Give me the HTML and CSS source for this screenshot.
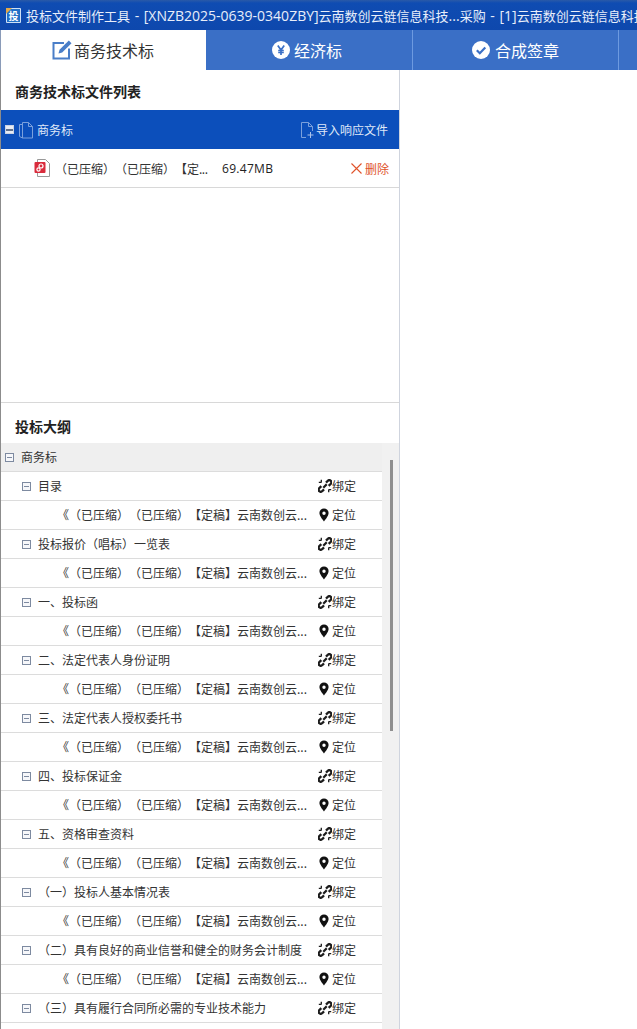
FILE: index.html
```html
<!DOCTYPE html>
<html lang="zh">
<head>
<meta charset="utf-8">
<title>投标文件制作工具</title>
<link rel="stylesheet" href="styles.css">
</head>
<body>
<svg class="defs" width="0" height="0">
  <defs>
    <symbol id="link" viewBox="0 0 14 14">
      <path d="M8 3.600 9.800 1.800a2.300 2.300 0 0 1 3 0 2.300 2.300 0 0 1 0 3L10.700 6.900M6 10.400 4.200 12.200a2.300 2.300 0 0 1-3 0 2.300 2.300 0 0 1 0-3L3.300 7.100" fill="none" stroke="#1c1c1c" stroke-width="2.300"/>
      <path d="M5.300 8.700 8.700 5.300" stroke="#1c1c1c" stroke-width="2.300"/>
      <path d="M.8 3.300h2.600M3.300.8v2.600M10.700 13.200v-2.600M13.200 10.700h-2.600" stroke="#1c1c1c" stroke-width="1.300"/>
    </symbol>
    <symbol id="pin" viewBox="0 0 10 14">
      <path fill-rule="evenodd" d="M5 .5a4.600 4.600 0 0 1 4.600 4.600C9.600 8.300 5 13.500 5 13.500S.4 8.300.4 5.100A4.600 4.600 0 0 1 5 .5Zm0 3a1.700 1.700 0 1 0 0 3.400 1.700 1.700 0 0 0 0-3.400Z" fill="#111"/>
    </symbol>
  </defs>
</svg>
<header class="titlebar">
  <span class="app-logo">
    <svg width="15" height="15" viewBox="0 0 15 15"><rect width="15" height="15" rx="1" fill="#cfe0f5"/><rect x="1" y="1" width="13" height="13" fill="#2270c8"/><path d="M0 0h6L0 6Z" fill="#e3a94a"/></svg>
    <span class="app-logo-text">投</span>
  </span>
  <span class="title-text">投标文件制作工具<span class="latin"> - [XNZB2025-0639-0340ZBY]</span>云南数创云链信息科技<span class="latin">...</span>采购<span class="latin"> - [1]</span>云南数创云链信息科技</span>
</header>
<nav class="tabs">
  <div class="tab tab-active">
    <svg width="22" height="22" viewBox="0 0 22 22"><path d="M13 4H2.500v15.500H18V9.500" fill="none" stroke="#4a7ec8" stroke-width="2"/><path d="M7.500 14.500 8.500 10.800 17.800 1.500 20.500 4.200 11.200 13.500Z" fill="#4a7ec8"/></svg>
    <span>商务技术标</span>
  </div>
  <div class="tab tab-second">
    <svg width="18" height="18" viewBox="0 0 18 18"><circle cx="9" cy="9" r="9" fill="#fff"/><path d="M5.800 4.500 9 9l3.200-4.500M9 9v5M6.200 9.500h5.600M6.200 11.500h5.600" fill="none" stroke="#3b70c6" stroke-width="1.700"/></svg>
    <span>经济标</span>
  </div>
  <div class="tab tab-third">
    <svg width="18" height="18" viewBox="0 0 18 18"><circle cx="9" cy="9" r="9" fill="#fff"/><path d="M4.800 9.200 7.800 12.200 13.300 6.500" fill="none" stroke="#3b70c6" stroke-width="2.200"/></svg>
    <span>合成签章</span>
  </div>
  <div class="tab tab-rest"></div>
</nav>
<main class="panel">
  <h2 class="section-head">商务技术标文件列表</h2>
  <div class="file-head">
    <span class="box box-light"></span>
    <svg class="doc-icon" width="16" height="18" viewBox="0 0 16 18"><path d="M4.500 1.500h6l4 4v11.500h-10Z" fill="none" stroke="#7ba0dc"/><path d="M4.500 3.500H1.500v12l3 1.500" fill="none" stroke="#7ba0dc"/><path d="M10.500 1.500v4h4" fill="none" stroke="#7ba0dc"/></svg>
    <span class="file-head-name">商务标</span>
    <svg class="import-icon" width="15" height="18" viewBox="0 0 15 18"><path d="M6 16.500H1.500v-15h7l4 4V10" fill="none" stroke="#7ba0dc"/><path d="M8.500 1.500v4h4" fill="none" stroke="#7ba0dc"/><path d="M10.500 11v6M7.500 14h6" stroke="#a9c2ea"/></svg>
    <span>导入响应文件</span>
  </div>
  <div class="file-row">
    <svg class="pdf-icon" width="16" height="18" viewBox="0 0 16 18"><path d="M3.500 .5h8l4 4v13h-12Z" fill="#fff" stroke="#999"/><rect x=".500" y="3" width="11" height="11" rx="1" fill="#d92b3c"/><circle cx="7" cy="7" r="2" fill="none" stroke="#fff" stroke-width="1.200"/><circle cx="4.500" cy="10.500" r="1.600" fill="none" stroke="#fff" stroke-width="1.200"/></svg>
    <span class="file-name">（已压缩）（已压缩）【定<span class="dots">...</span></span>
    <span class="file-size">69.47MB</span>
    <button class="delete" type="button">
      <svg width="11" height="11" viewBox="0 0 11 11"><path d="M.5.5l10 10M10.500.5l-10 10" stroke="#e0532a" stroke-width="1.100"/></svg>
      <span>删除</span>
    </button>
  </div>
  <div class="file-space"></div>
  <h2 class="section-head outline-head">投标大纲</h2>
  <div class="tree-wrap">
    <div class="tree">
      <div class="row row-root"><span class="box"></span><span class="label">商务标</span></div>

      <div class="row row-node"><span class="box"></span><span class="label">目录</span><span class="act"><svg class="ico-link" width="14" height="14"><use href="#link"/></svg>绑定</span></div>
      <div class="row row-leaf"><span class="label">《（已压缩）（已压缩）【定稿】云南数创云...</span><span class="act"><svg class="ico-pin" width="10" height="14"><use href="#pin"/></svg>定位</span></div>

      <div class="row row-node"><span class="box"></span><span class="label">投标报价（唱标）一览表</span><span class="act"><svg class="ico-link" width="14" height="14"><use href="#link"/></svg>绑定</span></div>
      <div class="row row-leaf"><span class="label">《（已压缩）（已压缩）【定稿】云南数创云...</span><span class="act"><svg class="ico-pin" width="10" height="14"><use href="#pin"/></svg>定位</span></div>

      <div class="row row-node"><span class="box"></span><span class="label">一、投标函</span><span class="act"><svg class="ico-link" width="14" height="14"><use href="#link"/></svg>绑定</span></div>
      <div class="row row-leaf"><span class="label">《（已压缩）（已压缩）【定稿】云南数创云...</span><span class="act"><svg class="ico-pin" width="10" height="14"><use href="#pin"/></svg>定位</span></div>

      <div class="row row-node"><span class="box"></span><span class="label">二、法定代表人身份证明</span><span class="act"><svg class="ico-link" width="14" height="14"><use href="#link"/></svg>绑定</span></div>
      <div class="row row-leaf"><span class="label">《（已压缩）（已压缩）【定稿】云南数创云...</span><span class="act"><svg class="ico-pin" width="10" height="14"><use href="#pin"/></svg>定位</span></div>

      <div class="row row-node"><span class="box"></span><span class="label">三、法定代表人授权委托书</span><span class="act"><svg class="ico-link" width="14" height="14"><use href="#link"/></svg>绑定</span></div>
      <div class="row row-leaf"><span class="label">《（已压缩）（已压缩）【定稿】云南数创云...</span><span class="act"><svg class="ico-pin" width="10" height="14"><use href="#pin"/></svg>定位</span></div>

      <div class="row row-node"><span class="box"></span><span class="label">四、投标保证金</span><span class="act"><svg class="ico-link" width="14" height="14"><use href="#link"/></svg>绑定</span></div>
      <div class="row row-leaf"><span class="label">《（已压缩）（已压缩）【定稿】云南数创云...</span><span class="act"><svg class="ico-pin" width="10" height="14"><use href="#pin"/></svg>定位</span></div>

      <div class="row row-node"><span class="box"></span><span class="label">五、资格审查资料</span><span class="act"><svg class="ico-link" width="14" height="14"><use href="#link"/></svg>绑定</span></div>
      <div class="row row-leaf"><span class="label">《（已压缩）（已压缩）【定稿】云南数创云...</span><span class="act"><svg class="ico-pin" width="10" height="14"><use href="#pin"/></svg>定位</span></div>

      <div class="row row-node"><span class="box"></span><span class="label">（一）投标人基本情况表</span><span class="act"><svg class="ico-link" width="14" height="14"><use href="#link"/></svg>绑定</span></div>
      <div class="row row-leaf"><span class="label">《（已压缩）（已压缩）【定稿】云南数创云...</span><span class="act"><svg class="ico-pin" width="10" height="14"><use href="#pin"/></svg>定位</span></div>

      <div class="row row-node"><span class="box"></span><span class="label">（二）具有良好的商业信誉和健全的财务会计制度</span><span class="act"><svg class="ico-link" width="14" height="14"><use href="#link"/></svg>绑定</span></div>
      <div class="row row-leaf"><span class="label">《（已压缩）（已压缩）【定稿】云南数创云...</span><span class="act"><svg class="ico-pin" width="10" height="14"><use href="#pin"/></svg>定位</span></div>

      <div class="row row-node"><span class="box"></span><span class="label">（三）具有履行合同所必需的专业技术能力</span><span class="act"><svg class="ico-link" width="14" height="14"><use href="#link"/></svg>绑定</span></div>
    </div>
    <div class="scroll"><div class="thumb"></div></div>
  </div>
</main>
</body>
</html>
```
FILE: styles.css
```css
* { box-sizing: border-box; }
html, body { margin: 0; height: 100%; }
body {
  width: 637px;
  height: 1029px;
  overflow: hidden;
  background: #fff;
  color: #222;
  font-family: "Noto Sans CJK SC", "Liberation Sans", sans-serif;
  font-size: 12px;
  text-spacing-trim: space-all;
}
.defs { display: block; height: 0; }

.titlebar {
  height: 30px;
  display: flex;
  align-items: center;
  padding-left: 6px;
  gap: 5px;
  background: linear-gradient(180deg, #2a5aa8 0, #0f4cb2 3px, #0e48ad 100%);
  color: #e8eefa;
  font-size: 13px;
  white-space: nowrap;
  overflow: hidden;
}
.app-logo { position: relative; flex: none; width: 15px; height: 15px; }
.app-logo svg { display: block; }
.app-logo-text {
  position: absolute;
  inset: 0;
  text-align: center;
  font-size: 10px;
  line-height: 16px;
  font-weight: 700;
  color: #fff;
}
.title-text { flex: none; }
.latin {
  font-family: "Open Sans", "Noto Sans CJK SC", sans-serif;
  font-size: 14px;
  word-spacing: 1px;
}

.tabs {
  height: 40px;
  display: flex;
  background: #3a6fc6;
  border-left: 1px solid #8a9bb8;
}
.tab {
  flex: none;
  width: 206px;
  display: flex;
  align-items: center;
  justify-content: center;
  gap: 5px;
  color: #fff;
  font-size: 16px;
  border-right: 1px solid #6d9ae0;
}
.tab-second { width: 207px; gap: 4px; padding-right: 4px; }
.tab-active {
  width: 205px;
  background: #fff;
  color: #333;
  border-right: 0;
  gap: 1px;
  padding-right: 2px;
}
.tab-rest { width: 19px; border-right: 0; }

.panel {
  width: 400px;
  height: 959px;
  border-left: 1px solid #8c8c8c;
  border-right: 1px solid #cfd4de;
  display: flex;
  flex-direction: column;
}
.section-head {
  margin: 0;
  height: 40px;
  flex: none;
  padding-left: 14px;
  font-size: 14px;
  line-height: 43px;
  font-weight: 700;
  color: #222;
}
.file-head {
  flex: none;
  height: 39px;
  display: flex;
  align-items: center;
  padding: 0 11px 0 4px;
  background: #0c4fbb;
  color: #dfe8f8;
}
.box {
  flex: none;
  width: 9px;
  height: 9px;
  border: 1px solid #7d8aa0;
  background: linear-gradient(#7d8aa0, #7d8aa0) center / 5px 1px no-repeat #f6f7fa;
}
.box-light { background: linear-gradient(#60708c, #60708c) center / 7px 2px no-repeat #e8ecf4; border-color: #c8d2e4; }
.doc-icon { margin-left: 4px; flex: none; }
.file-head-name { margin-left: 3px; flex: 1; }
.import-icon { margin-right: 1px; flex: none; }

.file-row {
  flex: none;
  height: 39px;
  display: flex;
  align-items: center;
  padding: 0 10px 0 33px;
  border-bottom: 1px solid #d8d8d8;
}
.pdf-icon { flex: none; }
.file-name { margin-left: 5px; width: 167px; flex: none; color: #333; white-space: nowrap; }
.dots { letter-spacing: -.5px; }
.file-size { flex: 1; color: #222; font-family: "Open Sans", "Noto Sans CJK SC", sans-serif; letter-spacing: .3px; }
.delete {
  display: flex;
  align-items: center;
  gap: 3px;
  padding: 0;
  border: 0;
  background: none;
  color: #e0532a;
  font: inherit;
}
.file-space { flex: none; height: 215px; border-bottom: 1px solid #d8d8d8; }
.outline-head { line-height: 47px; }

.tree-wrap { flex: 1; display: flex; min-height: 0; overflow: hidden; }
.tree { width: 381px; flex: none; }
.row {
  height: 29px;
  display: flex;
  align-items: center;
  border-bottom: 1px solid #dcdcdc;
  color: #333;
  white-space: nowrap;
  line-height: 16px;
}
.row-root { padding-left: 4px; background: #efefef; }
.row-root .label { margin-left: 7px; }
.row-node { padding: 0 26px 0 21px; }
.row-node .label { margin-left: 7px; flex: 1; }
.row-leaf { padding: 0 26px 0 56px; }
.row-leaf .label { flex: 1; }
.act {
  flex: none;
  width: 39px;
  display: flex;
  align-items: center;
  justify-content: flex-end;
  color: #333;
}
.act svg { flex: none; }
.ico-pin { margin-right: 3px; }
.scroll { flex: 1; background: #f1f1f1; position: relative; }
.thumb {
  position: absolute;
  left: 8px;
  top: 17px;
  width: 3px;
  height: 271px;
  background: #8f8f8f;
}
```
